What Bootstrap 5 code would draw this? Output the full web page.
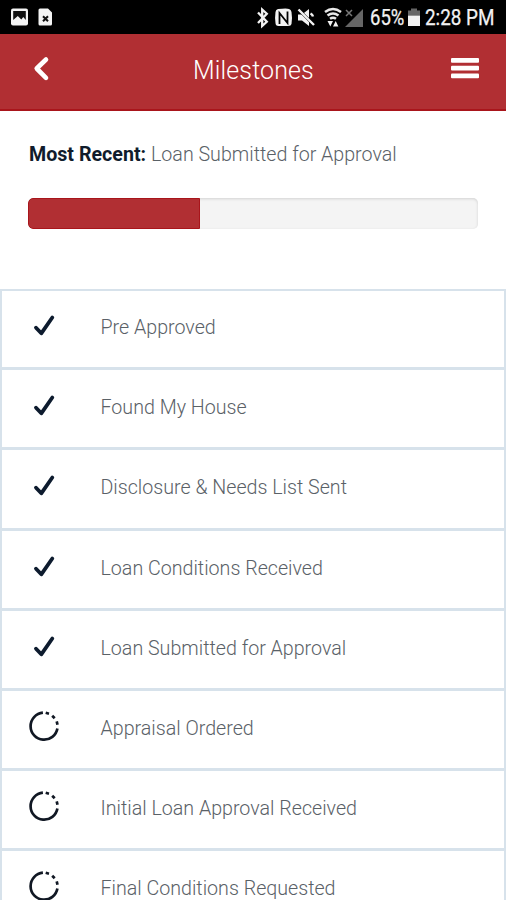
<!DOCTYPE html>
<html lang="en">
<head>
<meta charset="utf-8">
<meta name="viewport" content="width=device-width, initial-scale=1">
<title>Milestones</title>
<link href="https://cdn.jsdelivr.net/npm/bootstrap@5.3.0/dist/css/bootstrap.min.css" rel="stylesheet">
<style>
html, body { height: 900px; overflow: hidden; }
body { font-family: Roboto, "Liberation Sans", sans-serif; background: #fff; color: #101c2c; }
svg { display: block; flex: none; }
.status-bar { height: 34px; background: #000; padding: 0 12px 0 10px; }
.status-text { font-size: 21.5px; line-height: 24px; color: #f2f2f2; white-space: nowrap; padding-top: 2px; -webkit-text-stroke: .25px #f2f2f2; transform-origin: 0 50%; }
.charge { width: 38px; transform: scaleX(.86); }
.clock { width: 69px; margin-left: 5px; transform: scaleX(.878); }
.app-bar { height: 77px; background: #b12f33; border-bottom: 2px solid #a9151b; padding: 0 27px 4px 32px; }
.app-title { font-size: 25px; font-weight: 300; line-height: 30px; color: #fff; padding: 2px 0 0 4px; letter-spacing: .12px; }
.icon-btn { border: 0; padding: 0; background: none; }
.summary { height: 178px; padding: 32px 28px 0; }
.summary-line { font-size: 19.65px; line-height: 24px; white-space: nowrap; padding-left: 1px; }
.summary-line span, .step-name { font-weight: 300; color: #5a6167; }
.track { height: 31px; margin-top: 31px; border-radius: 5px; background: #f4f4f4; box-shadow: inset 0 1px 3px rgba(0,0,0,.14); }
.track .progress-bar { background: #b12f33; border: 1px solid #a9151b; border-radius: 5px 0 0 5px; }
.steps { border: 2px solid #d7e2eb; border-bottom: 0; border-radius: 0; }
.step { height: 80.2px; border: 0; border-bottom: 3px solid #d7e2eb; padding: 0 0 1px 25px; background: #fff; }
.step:first-child { height: 79.2px; padding-bottom: 2px; }
.step-icon { width: 34px; margin: 0 39.5px 4px 0; }
.step-name { font-size: 19.65px; line-height: 24px; white-space: nowrap; }
</style>
</head>
<body>
<svg class="d-none">
  <symbol id="check" viewBox="0 0 34 34"><path d="M9 18.700 14.300 24.300 25.300 8.500" fill="none" stroke="#0d1b2e" stroke-width="3.800" stroke-linecap="round" stroke-linejoin="round"/></symbol>
  <symbol id="pending" viewBox="0 0.800 34 34"><g fill="none" stroke="#111824" stroke-width="2.700"><path d="M15.900 3.500A13.500 13.500 0 1 0 30.400 19.200"/><path d="M18.700 3.600 22 4.500M25.200 6.500 27.700 9M29.700 12.200 30.500 15.500"/></g></symbol>
</svg>
<div class="status-bar d-flex align-items-center">
  <svg width="19" height="18" viewBox="0 0 19 18"><rect x="1" y="0.500" width="17" height="17" rx="2" fill="#f4f4f4"/><path d="M3.200 3h12.600v9l-2.500-3-2 2.500-3.500-3.500-4.600 4z" fill="#111"/></svg>
  <svg class="ms-2" width="16" height="18" viewBox="-1 0 16 18"><path d="M2 .5h8l4 4V16a1.500 1.500 0 0 1-1.500 1.500H2A1.500 1.500 0 0 1 .5 16V2A1.500 1.500 0 0 1 2 .5z" fill="#f4f4f4"/><path d="m5 8.300 5 5m0-5-5 5" stroke="#111" stroke-width="2"/></svg>
  <svg class="ms-auto" width="113" height="34" viewBox="257 1 113 34" fill="#f2f2f2">
    <path d="m258 13.500 8.800 9.300-4.600 4.200V10.500l4.600 4.200-8.800 9.300" fill="none" stroke="#f2f2f2" stroke-width="2.300"/>
    <path d="M278 10q9-1 11 0 2 .5 2.500 3 1 6 0 12-.5 2-3 2h-10q-3 0-3-3-.8-5.500 0-11 .3-2.500 2.500-3z"/><path d="M279.500 25V14l8 10V12.500" fill="none" stroke="#000" stroke-width="1.800"/>
    <path d="M298 15.500h4l7-5.500v17l-7-5.500h-4z"/><path d="m298 10 16 16" stroke="#000" stroke-width="3"/><path d="m298.500 10.500 15.500 15.500M310.500 14.500q2 1 2.500 3" stroke="#f2f2f2" stroke-width="2.400" fill="none"/>
    <path d="M325 13q8-6 16 0M327.500 16.500q5.500-4 11 0M330 19.800q3-2.200 6 0" fill="none" stroke="#e8e8e8" stroke-width="2.500"/><path d="M327.500 22h5.500l-2.700 5.500zM333 27.500l2.700-5.500 2.700 5.500z"/>
    <path d="M363 10v18h-18z" fill="#666"/><path d="m346 11 6 6m0-6-6 6" stroke="#777" stroke-width="1.500"/>
  </svg>
  <span class="status-text charge">65%</span>
  <svg width="12" height="34" viewBox="408 1 12 34" fill="#f2f2f2"><path d="M411 9.500h6v2h3v5h-12v-5h3z" fill="#666"/><path d="M408 16.500h12V27h-12z"/></svg>
  <span class="status-text clock">2:28 PM</span>
</div>
<nav class="app-bar d-flex align-items-center justify-content-between">
  <button class="icon-btn" aria-label="Back"><svg width="20" height="28" viewBox="0 0 20 28"><path d="M14 3.500 4.700 12.500l9.300 9.300" fill="none" stroke="#fff" stroke-width="4.600" stroke-linecap="round" stroke-linejoin="round"/></svg></button>
  <h1 class="app-title m-0">Milestones</h1>
  <button class="icon-btn" aria-label="Menu"><svg width="28" height="24" viewBox="0 0 28 24" fill="#fff"><rect y="0" width="28" height="4.800" rx="1"/><rect y="7.700" width="28" height="4.800" rx="1"/><rect y="15.400" width="28" height="4.800" rx="1"/></svg></button>
</nav>
<section class="summary">
  <div class="summary-line"><b>Most Recent:</b> <span>Loan Submitted for Approval</span></div>
  <div class="progress track"><div class="progress-bar" style="width:38.2%"></div></div>
</section>
<div class="list-group steps">
  <div class="list-group-item step d-flex align-items-center"><svg class="step-icon" height="34"><use href="#check"/></svg><div class="step-name">Pre Approved</div></div>
  <div class="list-group-item step d-flex align-items-center"><svg class="step-icon" height="34"><use href="#check"/></svg><div class="step-name">Found My House</div></div>
  <div class="list-group-item step d-flex align-items-center"><svg class="step-icon" height="34"><use href="#check"/></svg><div class="step-name">Disclosure &amp; Needs List Sent</div></div>
  <div class="list-group-item step d-flex align-items-center"><svg class="step-icon" height="34"><use href="#check"/></svg><div class="step-name">Loan Conditions Received</div></div>
  <div class="list-group-item step d-flex align-items-center"><svg class="step-icon" height="34"><use href="#check"/></svg><div class="step-name">Loan Submitted for Approval</div></div>
  <div class="list-group-item step d-flex align-items-center"><svg class="step-icon" height="34"><use href="#pending"/></svg><div class="step-name">Appraisal Ordered</div></div>
  <div class="list-group-item step d-flex align-items-center"><svg class="step-icon" height="34"><use href="#pending"/></svg><div class="step-name">Initial Loan Approval Received</div></div>
  <div class="list-group-item step d-flex align-items-center"><svg class="step-icon" height="34"><use href="#pending"/></svg><div class="step-name">Final Conditions Requested</div></div>
</div>
<script src="https://cdn.jsdelivr.net/npm/bootstrap@5.3.0/dist/js/bootstrap.bundle.min.js"></script>
</body>
</html>
